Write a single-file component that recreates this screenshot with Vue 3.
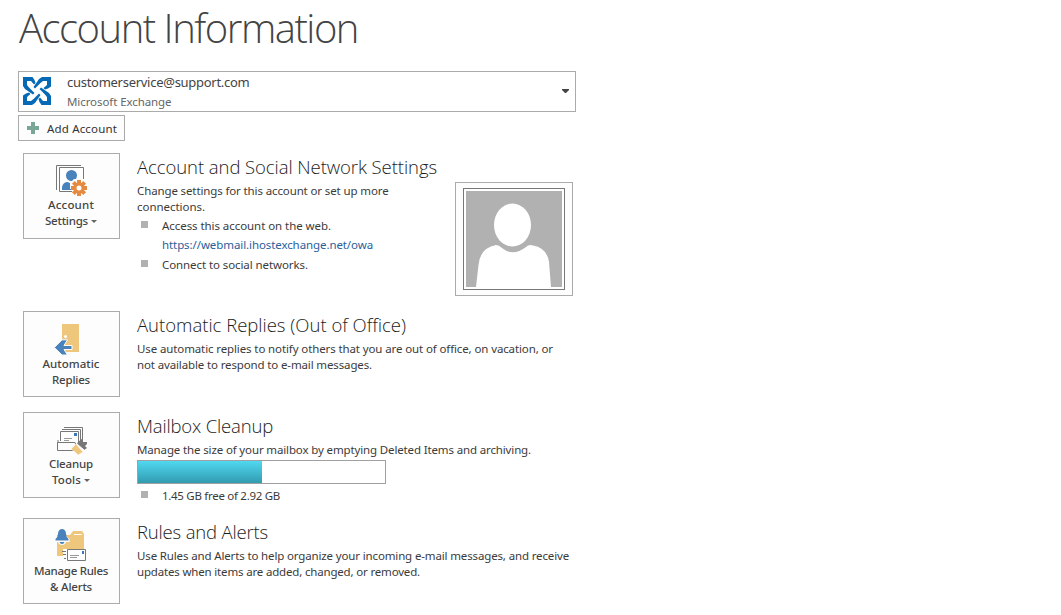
<script setup>
const used = (1 - 1.45 / 2.92) * 100 - 0.2

// Tightens or loosens letter spacing so a line fills the given width.
const vFit = {
  mounted(el, { value }) {
    const natural = el.getBoundingClientRect().width
    el.style.letterSpacing = `${(value - natural) / el.textContent.length}px`
  },
}
</script>

<template>
  <main class="page">
    <h1><span v-fit="339">Account Information</span></h1>

    <div class="account">
      <svg class="logo" viewBox="0 0 28 28">
        <g v-for="r in [0, 90, 180, 270]" :key="r" :transform="`rotate(${r} 14 14)`">
          <path d="M28 0H19L16 2L10.500 10L12 11.500L17.500 6L20 4H24V8L20.500 11L22 12.500L25 11.500L28 9.500Z" />
        </g>
      </svg>
      <div class="who">
        <div class="mail"><span v-fit="182.500">customerservice@support.com</span></div>
        <div class="kind"><span v-fit="104.500">Microsoft Exchange</span></div>
      </div>
      <svg class="drop" viewBox="0 0 7 4"><path d="M0 0H7V1L4 4H3L0 1Z" /></svg>
    </div>

    <button class="add">
      <svg viewBox="0 0 12 12"><path d="M4 0H8V4H12V8H8V12H4V8H0V4H4Z" /></svg>
      <span v-fit="70">Add Account</span>
    </button>

    <section class="s1">
      <button class="tile">
        <svg viewBox="0 0 32 32">
          <path d="M.5 25V.5H25" fill="none" stroke="#777" />
          <path d="M3.500 2.500H27.500V26.500H3.500Z" fill="#fff" stroke="#777" />
          <circle cx="15.500" cy="10.500" r="5.500" fill="#4a82bb" />
          <path d="M6 25V22Q7 17 12 17Q14 19 16 17L19 18V25Z" fill="#4a82bb" />
          <path d="M14 18L18 14H28V27H16V24H14Z" fill="#fdfdfd" />
          <g fill="#e58a40">
            <rect v-for="r in [0, 45, 90, 135]" :key="r" x="21" y="15" width="4" height="16" :transform="`rotate(${r} 23 23)`" />
          </g>
          <circle cx="23" cy="23" r="4" fill="#fdfdfd" stroke="#e58a40" stroke-width="3" />
        </svg>
        <b><span v-fit="46">Account</span></b>
        <b><span v-fit="43">Settings</span><i class="caret"></i></b>
      </button>
      <div class="body">
        <h2><span v-fit="300">Account and Social Network Settings</span></h2>
        <p><span v-fit="251.500">Change settings for this account or set up more</span></p>
        <p><span v-fit="68">connections.</span></p>
        <ul>
          <li><span v-fit="169">Access this account on the web.</span></li>
          <li class="plain"><a v-fit="211">https://webmail.ihostexchange.net/owa</a></li>
          <li><span v-fit="146">Connect to social networks.</span></li>
        </ul>
      </div>
      <div class="photo">
        <div class="frame">
          <svg viewBox="0 0 96 96">
            <rect width="96" height="96" fill="#b1b1b1" />
            <ellipse cx="46.500" cy="34" rx="18.500" ry="21.500" fill="#fff" />
            <path d="M10 96L12.500 74Q14 57 30 54Q33 54 36 57Q47 66 60 56Q63 53 67 54.500Q81 57 83 71L85 96Z" fill="#fff" />
          </svg>
        </div>
      </div>
    </section>

    <section class="s2">
      <button class="tile low">
        <svg viewBox="0 0 32 32">
          <path d="M6 0H23V28H6Z" fill="#efc77c" />
          <circle cx="9.500" cy="12.500" r="1.500" fill="#fff" />
          <path d="M-1.700 23.500L6 15.800H11.500L8 21.500H16V25.500H8L11.500 31H6Z" fill="#4a82bb" stroke="#fdfdfd" />
        </svg>
        <b><span v-fit="57">Automatic</span></b>
        <b><span v-fit="38">Replies</span></b>
      </button>
      <div class="body">
        <h2><span v-fit="269">Automatic Replies (Out of Office)</span></h2>
        <p><span v-fit="416">Use automatic replies to notify others that you are out of office, on vacation, or</span></p>
        <p><span v-fit="235">not available to respond to e-mail messages.</span></p>
      </div>
    </section>

    <section class="s3">
      <button class="tile">
        <svg viewBox="0 0 32 32">
          <g fill="#fdfdfd" stroke="#777">
            <path d="M8 3.500H26.500V16" fill="none" />
            <path d="M6 5.500H24.500V18" fill="none" />
            <path d="M4.500 17V7.500H22.500V19" />
            <path d="M2 16V19M1.500 18.500H19L22 26.500H1.500Z" />
          </g>
          <path d="M18 9H21V12H18Z" fill="#3876bd" />
          <path d="M8 14.500H16M8 16.500H13" stroke="#999" />
          <path d="M15 25L20 20L27 28L22 31L19 28Z" fill="#efc77c" stroke="#fdfdfd" stroke-width=".5" />
          <path d="M22 18L27 14V18H31V20L29 22L31 24L28 26L21 20Z" fill="#777" />
          <path d="M21 20L28 26" stroke="#fff" />
        </svg>
        <b><span v-fit="44">Cleanup</span></b>
        <b><span v-fit="29">Tools</span><i class="caret"></i></b>
      </button>
      <div class="body">
        <h2><span v-fit="136">Mailbox Cleanup</span></h2>
        <p><span v-fit="394">Manage the size of your mailbox by emptying Deleted Items and archiving.</span></p>
        <div class="bar"><div :style="{ width: used + '%' }"></div></div>
        <ul class="quota">
          <li><span v-fit="118">1.45 GB free of 2.92 GB</span></li>
        </ul>
      </div>
    </section>

    <section class="s4">
      <button class="tile low">
        <svg viewBox="0 0 32 32">
          <path d="M1 25V4H14L17 0H26L28 3V25Z" fill="#efc77c" />
          <path d="M18 3.500H26" stroke="#fdfdfd" />
          <path d="M-1 11V8L2 5V2Q3 -2 6 -2Q9 -2 10 2V5L13.500 8V11H10Q9 14 6 14Q3 14 2 11Z" fill="#fdfdfd" />
          <path d="M-.5 8Q2 6 2 2.500Q2.500 -2 6 -2Q9.500 -2 10 2.500Q10 6 12.500 8V9.500H-.5ZM3.500 11H8.500Q8 13 6 13Q4 13 3.500 11Z" fill="#4a82bb" />
          <path d="M7 18H32V31H10V26H7Z" fill="#fdfdfd" />
          <path d="M11.500 18.500H29.500V29.500H11.500Z" fill="#fff" stroke="#777" />
          <path d="M6 20.500H10M7 23.500H10M8 27.500H10" stroke="#777" />
          <path d="M14 24.500H23M14 26.500H21" stroke="#999" />
          <path d="M26 20H28V23H26Z" fill="#3876bd" />
        </svg>
        <b><span v-fit="74">Manage Rules</span></b>
        <b><span v-fit="42">&amp; Alerts</span></b>
      </button>
      <div class="body">
        <h2><span v-fit="131">Rules and Alerts</span></h2>
        <p><span v-fit="432">Use Rules and Alerts to help organize your incoming e-mail messages, and receive</span></p>
        <p><span v-fit="283">updates when items are added, changed, or removed.</span></p>
      </div>
    </section>
  </main>
</template>

<style>
body {
  background: #fff;
}
</style>

<style scoped>
.page {
  width: 1061px;
  height: 615px;
  overflow: hidden;
  box-sizing: border-box;
  padding-left: 18px;
  font: 11.5px/16px "Noto Sans", "Open Sans", sans-serif;
  color: #3b3b3b;
  white-space: nowrap;
}
h1, h2, p, ul {
  margin: 0;
  padding: 0;
}
h1 {
  height: 71px;
  padding-left: 1px;
  font: 300 40px/56px "Open Sans", "Noto Sans", sans-serif;
  color: #444;
}
.account {
  box-sizing: border-box;
  width: 558px;
  height: 41px;
  border: 1px solid #ababab;
  display: flex;
  padding: 0 6px 1px 4px;
  align-items: center;
}
.logo {
  width: 28px;
  height: 28px;
  fill: #0569b5;
}
.who {
  flex: 1;
  padding-left: 16px;
}
.mail {
  font-size: 13px;
  line-height: 20px;
  height: 20px;
  color: #444;
}
.kind {
  height: 18px;
  line-height: 19px;
  color: #666;
}
.drop {
  width: 7px;
  height: 4px;
  fill: #444;
}
button {
  font: inherit;
  color: #333;
  background: #fdfdfd;
  border: 1px solid #ababab;
  border-radius: 0;
  box-sizing: border-box;
}
.add {
  display: flex;
  align-items: center;
  gap: 8px;
  width: 107px;
  height: 26px;
  margin: 3px 0 12px;
  padding: 0 0 0 8px;
}
.add span {
  padding-top: 1px;
}
.add svg {
  width: 12px;
  height: 12px;
  fill: #7aa697;
}
section {
  display: flex;
  padding-left: 5px;
}
.s1 { height: 158px; }
.s2 { height: 101px; }
.s3 { height: 106px; }
.tile {
  width: 97px;
  height: 86px;
  padding: 11px 0 0;
  display: flex;
  flex-direction: column;
  align-items: center;
  flex: none;
  color: #444;
}
.low {
  padding-top: 12px;
}
.tile svg {
  width: 32px;
  height: 32px;
  margin-left: 1px;
  overflow: visible;
  flex: none;
}
.tile b {
  display: flex;
  align-items: center;
  padding-right: 1px;
  font-weight: 500;
}
.caret {
  margin-left: 3px;
  border: 3px solid transparent;
  border-top-color: #666;
  border-bottom: 0;
}
.body {
  margin-left: 17px;
  flex: none;
}
.s1 .body {
  width: 318px;
}
h2 {
  font: 300 18.5px/28px "Open Sans", "Noto Sans", sans-serif;
  height: 30px;
  color: #1c1c1c;
}
p {
  height: 16px;
}
ul {
  list-style: none;
  padding-top: 3px;
}
li {
  height: 20px;
  display: flex;
  gap: 14px;
  padding-left: 4px;
}
li::before {
  content: "";
  width: 7px;
  height: 7px;
  margin-top: 3px;
  background: #b1b1b1;
}
.plain {
  height: 20px;
  margin: -1px 0 0;
}
.plain::before {
  background: none;
}
a {
  color: #2a609c;
}
.photo {
  box-sizing: border-box;
  width: 118px;
  height: 114px;
  margin-top: 29px;
  padding: 5px 7px;
  border: 1px solid #ababab;
  background: #fdfdfd;
}
.frame {
  box-sizing: border-box;
  width: 102px;
  height: 102px;
  padding: 2px;
  border: 1px solid #777;
  background: #fff;
}
.frame svg {
  display: block;
  width: 96px;
  height: 96px;
}
.bar {
  box-sizing: border-box;
  width: 249px;
  height: 24px;
  margin-top: 2px;
  border: 1px solid #a0a0a0;
}
.bar div {
  height: 100%;
  background: linear-gradient(#50d8f0, #329bb0);
}
.quota {
  padding-top: 4px;
}
</style>
